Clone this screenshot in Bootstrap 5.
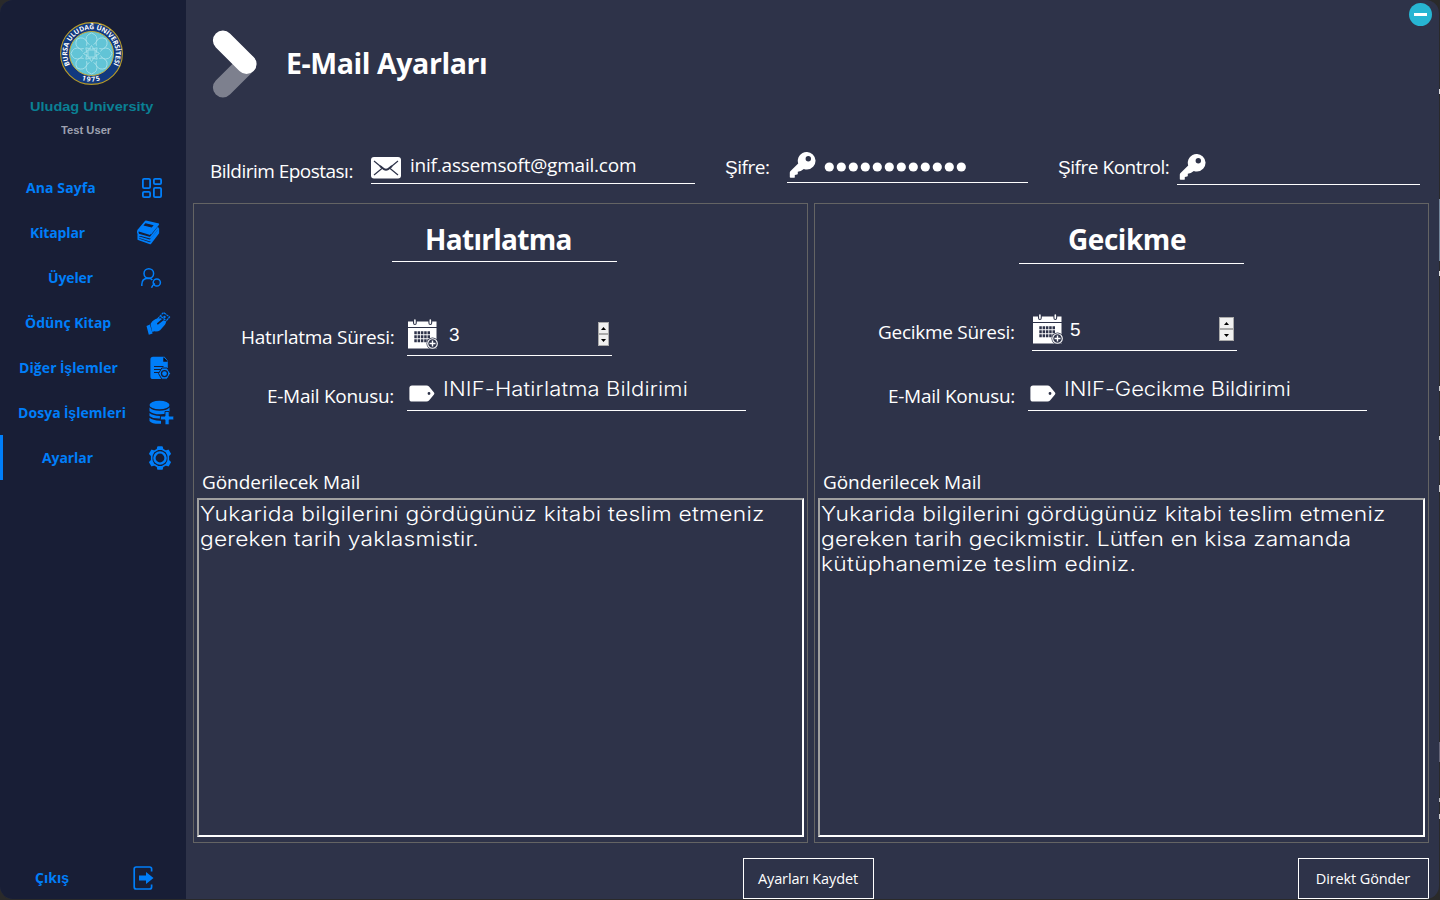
<!DOCTYPE html>
<html lang="tr">
<head>
<meta charset="utf-8">
<meta name="viewport" content="width=device-width, initial-scale=1">
<title>E-Mail Ayarları</title>
<link rel="stylesheet" href="https://cdn.jsdelivr.net/npm/bootstrap@5.3.0/dist/css/bootstrap.min.css">
<style>
  :root { --ink:#2e3349; --side:#181e36; --blue:#007ef9; }
  html, body { height:100%; overflow:hidden; }
  body { font-family:"Open Sans","Noto Sans",sans-serif; color:#fff;
    background:#2a2a2a linear-gradient(#2a2a2a 89px,#ddd 89px 94px,#2a2a2a 94px 199px,#74879a 199px 261px,#2a2a2a 261px 271px,#ddd 271px 276px,#2a2a2a 276px 386px,#ccc 386px 391px,#2a2a2a 391px 436px,#ccc 436px 440px,#2a2a2a 440px 485px,#ccc 485px 492px,#2a2a2a 492px 742px,#667 742px 762px,#2a2a2a 762px 798px,#bbb 798px 802px,#2a2a2a 802px 814px,#ccc 814px 819px,#2a2a2a 819px) no-repeat right top/1px 100%; }
  svg { display:block; flex:none; }
  .window { width:1439px; height:899px; border-radius:13px; background:var(--ink); overflow:hidden; }
  .backdrop { background:#2a2a2a; width:1439px; height:900px; }
  .sidebar { width:186px; background:var(--side); flex:none; }
  .brand { height:165px; padding-top:22px; font-family:"Liberation Sans",sans-serif; font-weight:700; }
  .brand svg { margin-left:60px; }
  .brand-name, .brand-user { transform-origin:0 50%; white-space:nowrap; }
  .brand-name { color:#0a8094; font-size:13.5px; line-height:18px; margin:13px 0 0 30px; transform:scaleX(1.075); }
  .brand-user { color:#9ea1b0; font-size:10px; line-height:14px; margin:8px 0 0 61px; transform:scaleX(1.12); }
  .menu-item { height:45px; color:var(--blue); font-size:14px; font-weight:700; line-height:20px; white-space:nowrap; padding:0; }
  .menu-item:hover { color:var(--blue); }
  .menu-item.active { box-shadow:inset 3px 0 var(--blue); }
  .alt { font-family:"Liberation Sans",sans-serif; }
  .m1{padding-left:26px;padding-right:23px;letter-spacing:.1px} .m2{padding-left:30px;padding-right:26px;letter-spacing:-.13px} .m3{padding-left:48px;padding-right:24px;letter-spacing:-.12px}
  .m4{padding-left:25px;padding-right:15px} .m5{padding-left:19px;padding-right:15px;letter-spacing:.09px} .m6{padding-left:18px;padding-right:12px;letter-spacing:.05px}
  .m7{padding-left:42px;padding-right:14px;letter-spacing:-.08px} .m8{padding-left:35px;padding-right:32px;margin-bottom:-1px}
  .topbar { height:145px; padding:28px 0 0 24px; }
  .topbar h1 { font-size:28.5px; line-height:40px; font-weight:700; margin:15px 0 0 28px; white-space:nowrap; letter-spacing:-.42px; }
  .minimize { width:23px; height:23px; border:0; border-radius:50%; background:#27b5d3; margin:-25px 7px 0 auto; }
  .minimize i { display:block; width:13px; height:3px; background:#fff; }
  .cap, .val, .subj { white-space:nowrap; font-size:19px; line-height:28px; flex:none; }
  .cap { letter-spacing:-.28px; }
  .t-mail { width:161px; margin-top:12px; letter-spacing:-.52px; }
  .t-pass { width:62px; margin:8px 0 0 30px; letter-spacing:-.45px; }
  .t-check { width:119px; margin:8px 0 0 30px; letter-spacing:-.46px; }
  .val { letter-spacing:-.21px; margin:6px 0 0 9px; }
  .num { font-family:"Liberation Sans",sans-serif; margin:2px 0 0 10px; }
  .late .num { margin-left:6px; }
  .subj { font-family:Inter,sans-serif; font-weight:300; font-size:20px; letter-spacing:.14px; margin:19px 0 0 8px; transform:scaleX(1.1); transform-origin:0 50%; }
  .late .subj { letter-spacing:-.05px; }
  .line-field { border-bottom:1px solid #fff; flex:none; }
  .accounts { height:58px; padding-left:24px; }
  .f-mail{width:324px;height:39px} .f-pass{width:241px;height:38px} .f-check{width:243px;height:40px}
  .f-mail svg { margin-top:12px; } .f-pass .key-icon { margin:7px 0 0 2px; } .f-check svg { margin:9px 0 0 2px; }
  .f-pass .dots { margin:16px 0 0 8px; fill:#fff; }
  .panels { padding-left:7px; gap:6px; }
  .panel { width:615px; height:640px; border:1px solid #646464; padding:0 3px; }
  .panel h2 { width:225px; font-size:28px; font-weight:700; line-height:40px; margin:0 0 0 195px; padding:15px 0 0 33px; height:58px; border-bottom:1px solid #fff; white-space:nowrap; letter-spacing:-.7px; }
  .late h2 { margin-left:201px; height:60px; padding-left:49px; letter-spacing:-.45px; }
  .period { height:94px; } .late .period { height:92px; }
  .period .line-field { width:205px; height:37px; margin-top:57px; }
  .period .line-field > svg { margin-left:1px; }
  .late .period .line-field { margin-top:50px; }
  .t-period { width:166px; margin:61px 0 0 44px; } .late .t-period { width:154px; margin:54px 0 0 60px; }
  .t-subject { width:140px; margin:26px 0 0 70px; }
  .t-body { margin:57px 0 2px 5px; letter-spacing:-.06px; }
  .subject, .subject .line-field { height:55px; }
  .subject .line-field { width:339px; }
  .subject svg { margin:29px 0 0 2px; }
  .spin { width:11px; height:24px; background:#aaa; margin:3px 3px 0 auto; padding:1px; }
  .late .spin { width:15px; }
  .spin b { display:flex; height:10px; margin-bottom:2px; background:#f0f0f0; align-items:center; justify-content:center; }
  .mailbox { width:607px; height:339px; border:2px solid #fff; border-color:#a0a0a0 #fff #fff #a0a0a0; padding:2px 1px 0; font:300 20px/25px Inter,sans-serif; }
  .mailbox div { white-space:nowrap; width:max-content; transform:scaleX(1.14); transform-origin:0 50%; letter-spacing:.25px; }
  .mailbox .tight { letter-spacing:.14px; }
  .actions { padding:15px 10px 0 557px; }
  .actions .btn { width:131px; height:41px; border:1px solid #fff; border-radius:0; color:#fff; font-size:14.5px; line-height:20px; padding:0 1px 0 0; white-space:nowrap; letter-spacing:-.12px; }
</style>
</head>
<body>
<svg width="0" height="0" class="position-absolute">
  <defs>
    <symbol id="key" viewBox="0 0 26 26"><path fill="#fff" fill-rule="evenodd" d="M17 0a8.800 8.800 0 0 0-8.300 11.500L.8 19.300Q.3 20 .3 20.800v4.200q0 .8.8.8h3.400q.8 0 .8-.9v-2l2.300-.3q.7 0 .7-.8v-2l3-.7 3-2.200q1.500.7 3.200.7A8.800 8.800 0 0 0 17 0zM18.800 4a2.700 2.700 0 1 1 0 5.400 2.700 2.700 0 0 1 0-5.400z"/></symbol>
    <symbol id="cal" viewBox="0 0 31 31"><path fill="#fff" d="M0 2.500h5V4q0 2 1.900 2t1.900-2V2.500h11.600V4q0 2 1.900 2t1.900-2V2.500h4.300v5.500H0zM0 9h28.500v20.500H0z"/><path stroke="#fff" stroke-width="1.600" stroke-linecap="round" d="M6.900 1v3.200M22.300 1v3.200"/><path stroke="#2e3349" stroke-width="3" stroke-dasharray="2.500 .8" d="M6.300 13.800h15.700M6.300 17.800h15.700M6.300 21.800h15.700"/><circle cx="24.500" cy="24.500" r="6" fill="#2e3349"/><circle cx="24.500" cy="24.500" r="4.800" fill="none" stroke="#fff" stroke-width="1.100"/><path stroke="#fff" stroke-width="1.400" d="M21.500 24.500h6M24.500 21.500v6"/></symbol>
    <symbol id="tag" viewBox="0 0 26 17"><path fill="#fff" fill-rule="evenodd" d="M3 .5h14.500q1.600 0 2.500.9l5 6q.8 1 0 2l-5 6q-.9 1.100-2.500 1.100H3q-2.600 0-2.600-2.600V3Q.4.500 3 .500zM20 7.100a1.400 1.400 0 1 0 0 2.800 1.400 1.400 0 0 0 0-2.800z"/></symbol>
  </defs>
</svg>
<div class="backdrop">
<div class="window d-flex">
  <nav class="sidebar d-flex flex-column">
    <div class="brand">
      <svg width="63" height="63" viewBox="0 0 63 63">
        <defs><path id="arcTop" d="M10 43A24.300 24.300 0 1 1 53 43"/><path id="arcBot" d="M18 56.200A28.500 28.500 0 0 0 45 56.200"/></defs>
        <circle cx="31.500" cy="31.500" r="30.900" fill="#12397f" stroke="#b59a2a" stroke-width="1.100"/>
        <circle cx="31.500" cy="31.500" r="22" fill="#62c4d6" stroke="#c5ae3c" stroke-width="1"/>
        <g fill="none" stroke="#a5e0e9" stroke-width=".9">
          <g id="pt"><path d="M29.500 22.500q-3.500-1.500-3.500-5 0-3.300 2.500-5l3-1.500 3 1.500q2.500 1.700 2.500 5 0 3.500-3.500 5M31.500 23.500l-3 4.500M31.500 23.500l3 4.500"/></g>
          <use href="#pt" transform="rotate(45 31.500 31.500)"/><use href="#pt" transform="rotate(90 31.500 31.500)"/><use href="#pt" transform="rotate(135 31.500 31.500)"/><use href="#pt" transform="rotate(180 31.500 31.500)"/><use href="#pt" transform="rotate(225 31.500 31.500)"/><use href="#pt" transform="rotate(270 31.500 31.500)"/><use href="#pt" transform="rotate(315 31.500 31.500)"/>
          <rect x="28" y="28" width="7" height="7"/>
        </g>
        <g fill="#fff" font-family="Open Sans, sans-serif" font-weight="700" font-size="6.800"><text textLength="99"><textPath href="#arcTop">BURSA ULUDAĞ ÜNİVERSİTESİ</textPath></text><text><textPath href="#arcBot" startOffset="50%" text-anchor="middle" letter-spacing="1.200">1975</textPath></text></g>
      </svg>
      <div class="brand-name">Uludag University</div>
      <div class="brand-user">Test User</div>
    </div>
    <a class="menu-item nav-link d-flex align-items-center justify-content-between m1"><span>Ana Sayfa</span>
      <svg width="22" height="22" viewBox="0 0 22 22" fill="none" stroke="#007ef9" stroke-width="1.800"><rect x="1.900" y="1.900" width="7.200" height="9.200" rx="1.200"/><rect x="12.900" y="1.900" width="7.200" height="5.200" rx="1.200"/><rect x="1.900" y="14.900" width="7.200" height="5.200" rx="1.200"/><rect x="12.900" y="10.900" width="7.200" height="9.200" rx="1.200"/></svg></a>
    <a class="menu-item nav-link d-flex align-items-center justify-content-between m2"><span>Kitaplar</span>
      <svg width="24" height="25" viewBox="0 0 24 25"><path fill="#007ef9" d="M10 .5l13 3-8.500 10.500L2 10.500z"/><path stroke="#181e36" stroke-width="1.300" d="M9.500 4l7 1.600-1 1.200-7-1.600z"/><path fill="none" stroke="#007ef9" stroke-width="1.700" stroke-linejoin="round" d="M10 1L2.200 10.200q-1.200 2.200.2 4.300l11.900 3.200 8-10.200M14.400 14L22.600 4M2.300 14.500v4.700l12 4.200 8-10.500V8.500M2.300 10.500l12 3.600M2.400 17l11.900 3.600 8-10"/></svg></a>
    <a class="menu-item nav-link d-flex align-items-center justify-content-between m3"><span>Üyeler</span>
      <svg width="22" height="22" viewBox="0 0 22 22" fill="none" stroke="#007ef9" stroke-width="1.500"><circle cx="8.800" cy="6.500" r="4.800"/><path d="M1.800 19v-1.500q0-6 6.200-6.200 3 0 4.300 1.700M11.500 20.800q.8-2.600 3.600-4.100"/><circle cx="16.800" cy="15.500" r="3.600"/></svg></a>
    <a class="menu-item nav-link d-flex align-items-center justify-content-between m4"><span>Ödünç Kitap</span>
      <svg width="26" height="24" viewBox="0 0 26 24"><path fill="none" stroke="#007ef9" stroke-width="1.200" stroke-dasharray="2.500 .6" d="M12.500 8L18.500 1.500l6 4.500L17 15M16 5.500l5 4"/><circle cx="19.500" cy="6" r="1.200" fill="#007ef9"/><path fill="#007ef9" d="M5.500 13q3-5.500 8-5.500 2.500-.6 3.500.5l-5 4.300q-.3 1.500 1.200 1.200l5.300-4.300q2.300.3 2.200 2 .2 1.500-1 2.900l-4.600 5.100q-2.300 1.600-5.800 1.100L7.300 21zM1.500 15l3.400-1.600 2.700 9-3.800 1.300z"/></svg></a>
    <a class="menu-item nav-link d-flex align-items-center justify-content-between m5"><span>Diğer <span class="alt">İş</span>lemler</span>
      <svg width="21" height="24" viewBox="0 0 21 24"><path fill="#007ef9" d="M3 .8h11.500l3.300 4v9.500H12V23H3q-2.600 0-2.600-2.600v-17Q.4.800 3 .8z"/><path stroke="#181e36" stroke-width="1.200" d="M4 10.500h9.500M4 13.500h7M4 16.500h5M13.800 1.500v3.700h3.700"/><path fill="#007ef9" stroke="#181e36" stroke-width="1" d="M11.800 12h5.400l3.300 5.500-3.300 5.700h-5.400L8.500 17.500z"/><circle cx="14.500" cy="17.600" r="3" fill="none" stroke="#181e36" stroke-width="1.300"/></svg></a>
    <a class="menu-item nav-link d-flex align-items-center justify-content-between m6"><span>Dosya <span class="alt">İş</span>lemleri</span>
      <svg width="25" height="25" viewBox="0 0 25 25" fill="#007ef9"><ellipse cx="10.500" cy="5" rx="10" ry="4.300"/><path d="M.5 7.500q3 3.300 10 3.300t10-3.300v4.200q-2 2.300-9 2.600-8 0-11-3.100zM.5 13q3 2.800 10.500 2.900v2.700q-7.500.2-10.500-2.500zM.5 17.800q3 2.700 10.500 2.900l1 .1v3Q3 24.200.5 21z"/><path stroke="#181e36" stroke-width=".9" d="M16 11.500h4.200v4.600h4.600v3.800h-4.600v4.900H16v-4.900h-4.600v-3.800H16z"/></svg></a>
    <a class="menu-item nav-link active d-flex align-items-center justify-content-between m7"><span>Ayarlar</span>
      <svg width="24" height="24" viewBox="0 0 24 24"><path fill="none" stroke="#007ef9" stroke-width="1.600" stroke-linejoin="round" d="M9.500 3.500L10 1h4l.6 2.500 3 1.700 2.600-.8 2 3.400-1.900 1.900v4.600l1.900 1.900-2 3.400-2.600-.8-3 1.700L14 23h-4l-.5-2.500-3-1.700-2.700.8-2-3.400 1.900-1.900V9.700L1.800 7.800l2-3.400 2.700.8z"/><path fill="#007ef9" d="M10 1h4l.6 3H9.400zM10 23h4l.6-3H9.400zM1.800 7.800l2-3.400 3 1-2.800 5zM22.200 7.800l-2-3.400-3 1 2.800 5zM1.800 16.200l2 3.400 3-1-2.800-5zM22.200 16.200l-2 3.400-3-1 2.800-5z"/><circle cx="12" cy="12" r="5.600" fill="#181e36" stroke="#007ef9" stroke-width="2.400"/></svg></a>
    <a class="menu-item nav-link d-flex align-items-center justify-content-between mt-auto m8"><span>Çıkı<span class="alt">ş</span></span>
      <svg width="21" height="24" viewBox="0 0 21 24"><path fill="none" stroke="#007ef9" stroke-width="1.700" d="M18.600 5.500V3q0-2-2-2H3.200Q1.200 1 1.200 3v18q0 2 2 2h13.400q2 0 2-2v-2.500"/><path fill="#007ef9" d="M6 9.500h7V6l7.500 6-7.500 6v-3.500H6z"/></svg></a>
  </nav>
  <main class="flex-grow-1">
    <header class="topbar d-flex align-items-start">
      <svg width="48" height="72" viewBox="0 0 48 72"><path stroke="#fff" stroke-opacity=".38" stroke-width="20" stroke-linecap="round" d="M12.900 59.500L36.500 36"/><path stroke="#fff" stroke-width="20" stroke-linecap="round" d="M12.900 12.500L36.500 36"/></svg>
      <h1>E-Mail Ayarları</h1>
      <button class="minimize d-flex align-items-center justify-content-center p-0" aria-label="Küçült"><i></i></button>
    </header>
    <section class="accounts d-flex align-items-start">
      <label class="cap t-mail">Bildirim Epostası:</label>
      <div class="line-field f-mail d-flex align-items-start">
        <svg width="30" height="22" viewBox="0 0 30 22"><rect width="30" height="21.500" rx="3" fill="#fff"/><path fill="none" stroke="#2e3349" stroke-width="1.200" d="M3 4l8.500 7L3 18M27 4l-8.500 7L27 18"/><path fill="none" stroke="#2e3349" stroke-width="2" d="M9 9l4 3.200q2 1.200 4 0L21 9"/></svg>
        <span class="val">inif.assemsoft@gmail.com</span>
      </div>
      <label class="cap t-pass"><span class="alt">Ş</span>ifre:</label>
      <div class="line-field f-pass d-flex align-items-start">
        <svg class="key-icon" width="27" height="26"><use href="#key"/></svg>
        <svg class="dots" width="144" height="12"><circle cx="5.300" cy="6" r="4.600"/><circle cx="17.300" cy="6" r="4.600"/><circle cx="29.300" cy="6" r="4.600"/><circle cx="41.300" cy="6" r="4.600"/><circle cx="53.300" cy="6" r="4.600"/><circle cx="65.300" cy="6" r="4.600"/><circle cx="77.300" cy="6" r="4.600"/><circle cx="89.300" cy="6" r="4.600"/><circle cx="101.300" cy="6" r="4.600"/><circle cx="113.300" cy="6" r="4.600"/><circle cx="125.300" cy="6" r="4.600"/><circle cx="137.300" cy="6" r="4.600"/></svg>
      </div>
      <label class="cap t-check"><span class="alt">Ş</span>ifre Kontrol:</label>
      <div class="line-field f-check"><svg width="27" height="26"><use href="#key"/></svg></div>
    </section>
    <div class="panels d-flex">
      <section class="panel">
        <h2>Hatırlatma</h2>
        <div class="period d-flex align-items-start">
          <label class="cap t-period">Hatırlatma Süresi:</label>
          <div class="line-field d-flex align-items-start"><svg width="31" height="31"><use href="#cal"/></svg><span class="val num">3</span><span class="spin"><b><svg width="5" height="3"><path d="M0 3h5L2.500 0z"/></svg></b><b><svg width="5" height="3"><path d="M0 0h5L2.500 3z"/></svg></b></span></div>
        </div>
        <div class="subject d-flex align-items-start">
          <label class="cap t-subject">E-Mail Konusu:</label>
          <div class="line-field d-flex align-items-start"><svg width="26" height="17"><use href="#tag"/></svg><span class="subj">INIF-Hatirlatma Bildirimi</span></div>
        </div>
        <div class="cap t-body">Gönderilecek Mail</div>
        <div class="mailbox"><div>Yukarida bilgilerini gördügünüz kitabi teslim etmeniz</div><div class="tight">gereken tarih yaklasmistir.</div></div>
      </section>
      <section class="panel late">
        <h2>Gecikme</h2>
        <div class="period d-flex align-items-start">
          <label class="cap t-period">Gecikme Süresi:</label>
          <div class="line-field d-flex align-items-start"><svg width="31" height="31"><use href="#cal"/></svg><span class="val num">5</span><span class="spin"><b><svg width="5" height="3"><path d="M0 3h5L2.500 0z"/></svg></b><b><svg width="5" height="3"><path d="M0 0h5L2.500 3z"/></svg></b></span></div>
        </div>
        <div class="subject d-flex align-items-start">
          <label class="cap t-subject">E-Mail Konusu:</label>
          <div class="line-field d-flex align-items-start"><svg width="26" height="17"><use href="#tag"/></svg><span class="subj">INIF-Gecikme Bildirimi</span></div>
        </div>
        <div class="cap t-body">Gönderilecek Mail</div>
        <div class="mailbox"><div>Yukarida bilgilerini gördügünüz kitabi teslim etmeniz</div><div class="tight">gereken tarih gecikmistir. Lütfen en kisa zamanda</div><div>kütüphanemize teslim ediniz.</div></div>
      </section>
    </div>
    <footer class="actions d-flex justify-content-between">
      <button class="btn">Ayarları Kaydet</button>
      <button class="btn">Direkt Gönder</button>
    </footer>
  </main>
</div>
</div>
<script src="https://cdn.jsdelivr.net/npm/bootstrap@5.3.0/dist/js/bootstrap.bundle.min.js"></script>
</body>
</html>
